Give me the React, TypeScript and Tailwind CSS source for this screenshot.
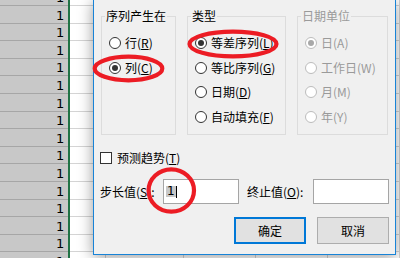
import React from "react";

const rows = Array.from({ length: 16 });
const whiteCols = [36, 78, 72, 72, 72];

function Radio({ checked, disabled }: { checked?: boolean; disabled?: boolean }) {
  return (
    <span
      className={`flex h-[12px] w-[12px] shrink-0 items-center justify-center rounded-full border bg-white ${
        disabled ? "border-[#bcbcbc]" : "border-[#333333]"
      }`}
    >
      {checked && (
        <span className={`h-[6px] w-[6px] rounded-full ${disabled ? "bg-[#a8a8a8]" : "bg-[#333333]"}`} />
      )}
    </span>
  );
}

type Opt = { label: string; key?: string; checked?: boolean };

function Group({
  title,
  width,
  options,
  disabled,
}: {
  title: string;
  width: string;
  options: Opt[];
  disabled?: boolean;
}) {
  return (
    <fieldset className={`h-[126px] ${width} border border-[#dcdcdc]`}>
      <legend
        className={`ml-[3px] px-[1px] text-[12px] leading-[14px] ${disabled ? "text-[#9a9a9a]" : "text-black"}`}
      >
        {title}
      </legend>
      <div className="flex flex-col pl-[7px] pt-[7.5px]">
        {options.map((o) => (
          <div key={o.label} className="flex h-[24.7px] items-center gap-[4px]">
            <Radio checked={o.checked} disabled={disabled} />
            <span className={`text-[12px] leading-[14px] ${disabled ? "text-[#9a9a9a]" : "text-black"}`}>
              {o.label}(
              {o.key && !disabled ? <span className="underline">{o.key}</span> : o.key})
            </span>
          </div>
        ))}
      </div>
    </fieldset>
  );
}

function Sheet() {
  return (
    <div className="-mt-[11.5px] flex">
      <div className="w-[77px] bg-[#c8c8c8]">
        {rows.map((_, i) => (
          <div
            key={i}
            className="flex h-[17.6px] items-end justify-end border-b border-[#a6a6a6] pb-[1px] pr-[4px] font-['DejaVu_Sans',sans-serif] text-[13px] leading-[13px] text-black"
          >
            1
          </div>
        ))}
      </div>
      <div className="w-[2px] bg-[#217346]" />
      {whiteCols.map((w, c) => (
        <div key={c} className="shrink-0 border-r border-[#d4d4d4]" style={{ width: w }}>
          {rows.map((_, i) => (
            <div key={i} className="h-[17.6px] border-b border-[#d4d4d4]" />
          ))}
        </div>
      ))}
    </div>
  );
}

function Dialog() {
  return (
    <div className="absolute left-[93px] top-0 h-[255px] w-[303px] border border-t-0 border-[#1883d7] bg-[#f0f0f0] font-['Noto_Sans_CJK_SC',sans-serif] text-black shadow-[0_2px_14px_rgba(0,0,0,0.4)]">
      <div className="flex gap-[11px] pl-[7px] pt-[9px]">
        <Group
          title="序列产生在"
          width="w-[75px]"
          options={[
            { label: "行", key: "R" },
            { label: "列", key: "C", checked: true },
          ]}
        />
        <Group
          title="类型"
          width="w-[99px]"
          options={[
            { label: "等差序列", key: "L", checked: true },
            { label: "等比序列", key: "G" },
            { label: "日期", key: "D" },
            { label: "自动填充", key: "F" },
          ]}
        />
        <Group
          title="日期单位"
          width="w-[91px]"
          disabled
          options={[
            { label: "日", key: "A", checked: true },
            { label: "工作日", key: "W" },
            { label: "月", key: "M" },
            { label: "年", key: "Y" },
          ]}
        />
      </div>

      <div className="mt-[15px] flex h-[16px] items-center pl-[6px]">
        <span className="h-[12px] w-[12px] border border-[#333333] bg-white" />
        <span className="ml-[5px] text-[12px] leading-[14px]">
          预测趋势(<span className="underline">T</span>)
        </span>
      </div>

      <div className="mt-[13px] flex h-[25px] items-center pl-[6px] text-[12px] leading-[14px]">
        <span className="w-[63px]">
          步长值(<span className="underline">S</span>):
        </span>
        <div className="flex h-[25px] w-[76px] items-center border border-[#a5a5a5] bg-white pl-[2px]">
          <span className="bg-[#c8c8c8] px-[1px] font-['DejaVu_Sans',sans-serif] text-[12px] leading-[11px]">1</span>
          <span className="h-[12px] w-[1px] bg-black" />
        </div>
        <span className="ml-[8px] w-[66px]">
          终止值(<span className="underline">O</span>):
        </span>
        <div className="h-[25px] w-[76px] border border-[#a5a5a5] bg-white" />
      </div>

      <div className="mt-[13px] flex justify-end gap-[11px] pr-[6px] text-[12px] leading-[14px]">
        <button className="h-[27px] w-[72px] border-2 border-[#0078d7] bg-[#e1e1e1]">确定</button>
        <button className="h-[27px] w-[72px] border border-[#adadad] bg-[#e1e1e1]">取消</button>
      </div>
    </div>
  );
}

export default function App() {
  return (
    <div className="relative h-[258px] w-[400px] overflow-hidden bg-white">
      <Sheet />
      <Dialog />
      <svg className="pointer-events-none absolute inset-0" width="400" height="258" viewBox="0 0 400 258">
        <g fill="none" stroke="#ec1c24" strokeWidth="4.2">
          <ellipse cx="128.5" cy="68.5" rx="33.8" ry="11.8" />
          <ellipse cx="233" cy="44" rx="43.5" ry="12.4" />
          <ellipse cx="171.3" cy="190.5" rx="22.7" ry="21.2" />
        </g>
      </svg>
    </div>
  );
}
